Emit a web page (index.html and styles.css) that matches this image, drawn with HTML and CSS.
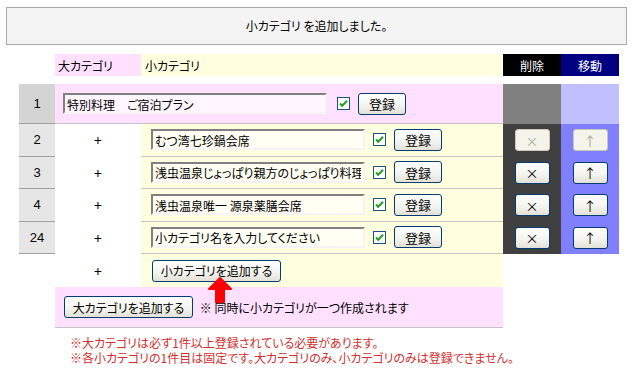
FILE: index.html
```html
<!doctype html>
<html lang="ja">
<head>
    <meta charset="utf-8">
    <title>カテゴリ設定</title>
    <link rel="stylesheet" href="styles.css">
</head>
<body>
    <div class="notice">小カテゴリ を追加しました。</div>

    <table class="cats">
        <tr class="head">
            <td class="num"></td>
            <td class="big">大カテゴリ</td>
            <td class="small">小カテゴリ</td>
            <td class="del">削除</td>
            <td class="move">移動</td>
        </tr>
        <tr class="parent">
            <td class="num">1</td>
            <td class="body" colspan="2">
                <div class="fields">
                    <input type="text" class="name-big" value="特別料理&#12288;ご宿泊プラン">
                    <span class="check"><svg width="13" height="13" viewBox="0 0 13 13"><rect x="0.5" y="0.5" width="12" height="12" fill="#fff" stroke="#1c5180"/><path d="M3 6.5 L5.2 8.8 L10 3.8" fill="none" stroke="#21a121" stroke-width="2"/></svg></span>
                    <button class="btn btn-save">登録</button>
                </div>
            </td>
            <td class="del"></td>
            <td class="move"></td>
        </tr>
        <tr class="child">
            <td class="num">2</td>
            <td class="plus">+</td>
            <td class="body">
                <div class="fields">
                    <input type="text" class="name-small" value="むつ湾七珍鍋会席">
                    <span class="check"><svg width="13" height="13" viewBox="0 0 13 13"><rect x="0.5" y="0.5" width="12" height="12" fill="#fff" stroke="#1c5180"/><path d="M3 6.5 L5.2 8.8 L10 3.8" fill="none" stroke="#21a121" stroke-width="2"/></svg></span>
                    <button class="btn btn-save">登録</button>
                </div>
            </td>
            <td class="del"><button class="btn btn-small" disabled>×</button></td>
            <td class="move"><button class="btn btn-small" disabled>↑</button></td>
        </tr>
        <tr class="child">
            <td class="num">3</td>
            <td class="plus">+</td>
            <td class="body">
                <div class="fields">
                    <input type="text" class="name-small" value="浅虫温泉じょっぱり親方のじょっぱり料理">
                    <span class="check"><svg width="13" height="13" viewBox="0 0 13 13"><rect x="0.5" y="0.5" width="12" height="12" fill="#fff" stroke="#1c5180"/><path d="M3 6.5 L5.2 8.8 L10 3.8" fill="none" stroke="#21a121" stroke-width="2"/></svg></span>
                    <button class="btn btn-save">登録</button>
                </div>
            </td>
            <td class="del"><button class="btn btn-small">×</button></td>
            <td class="move"><button class="btn btn-small">↑</button></td>
        </tr>
        <tr class="child">
            <td class="num">4</td>
            <td class="plus">+</td>
            <td class="body">
                <div class="fields">
                    <input type="text" class="name-small" value="浅虫温泉唯一 源泉薬膳会席">
                    <span class="check"><svg width="13" height="13" viewBox="0 0 13 13"><rect x="0.5" y="0.5" width="12" height="12" fill="#fff" stroke="#1c5180"/><path d="M3 6.5 L5.2 8.8 L10 3.8" fill="none" stroke="#21a121" stroke-width="2"/></svg></span>
                    <button class="btn btn-save">登録</button>
                </div>
            </td>
            <td class="del"><button class="btn btn-small">×</button></td>
            <td class="move"><button class="btn btn-small">↑</button></td>
        </tr>
        <tr class="child">
            <td class="num">24</td>
            <td class="plus">+</td>
            <td class="body">
                <div class="fields">
                    <input type="text" class="name-small" value="小カテゴリ名を入力してください">
                    <span class="check"><svg width="13" height="13" viewBox="0 0 13 13"><rect x="0.5" y="0.5" width="12" height="12" fill="#fff" stroke="#1c5180"/><path d="M3 6.5 L5.2 8.8 L10 3.8" fill="none" stroke="#21a121" stroke-width="2"/></svg></span>
                    <button class="btn btn-save">登録</button>
                </div>
            </td>
            <td class="del"><button class="btn btn-small">×</button></td>
            <td class="move"><button class="btn btn-small">↑</button></td>
        </tr>
        <tr class="add-small">
            <td class="blank"></td>
            <td class="plus">+</td>
            <td class="body">
                <div class="add-wrap">
                    <button class="btn btn-add">小カテゴリを追加する</button>
                    <svg class="arrow" width="26" height="26" viewBox="0 0 26 26"><path d="M13 1 L24 12 L17 12 L17 25 L9 25 L9 12 L2 12 Z" fill="#ff0000" stroke="#ff0000" stroke-width="2" stroke-linejoin="round"/></svg>
                </div>
            </td>
            <td class="blank" colspan="2"></td>
        </tr>
        <tr class="add-big">
            <td class="blank"></td>
            <td class="body" colspan="2">
                <button class="btn btn-add">大カテゴリを追加する</button>
                <span class="hint">※ 同時に小カテゴリが一つ作成されます</span>
            </td>
            <td class="blank" colspan="2"></td>
        </tr>
    </table>

    <div class="notes">
        <div>※大カテゴリは必ず1件以上登録されている必要があります。</div>
        <div>※各小カテゴリの1件目は固定です。大カテゴリのみ、小カテゴリのみは登録できません。</div>
    </div>
</body>
</html>
```

FILE: styles.css
```css
body {
    margin: 0;
    padding: 7px 0 0 6px;
    font-family: "Noto Sans CJK JP", "DejaVu Sans", sans-serif;
    font-size: 12px;
    font-feature-settings: "palt";
    color: #000;
    background-color: #fff;
}
.notice {
    width: 619px;
    height: 36px;
    line-height: 36px;
    border: 1px solid #a8a8a8;
    background-color: #f4f4f4;
    text-align: center;
}
.cats {
    margin: 9px 0 0 13px;
    border-collapse: separate;
    border-spacing: 0;
    width: 600px;
    table-layout: fixed;
}
.cats td {
    padding: 0;
    vertical-align: middle;
}
.head td {
    height: 22px;
    border-bottom: 8px solid #fff;
}
.head .num {
    width: 36px;
}
.head .big {
    width: 83px;
    padding-left: 3px;
    background-color: #ffe0ff;
}
.head .small {
    padding-left: 4px;
    width: 358px;
    background-color: #ffffe0;
}
.head .del,
.head .move {
    width: 58px;
    color: #fff;
    text-align: center;
}
.head .del {
    background-color: #000;
}
.head .move {
    background-color: #000080;
}
.num {
    text-align: center;
    font-family: "Liberation Sans", sans-serif;
    font-size: 13px;
}
.parent td {
    height: 39px;
}
.parent .num {
    background-color: #d4d4d4;
    border-bottom: 1px solid #a0a0a0;
}
.parent .body {
    background-color: #ffe0ff;
    border-bottom: 1px solid #c4c4c4;
    padding-left: 8px;
}
.parent .del {
    background-color: #808080;
}
.parent .move {
    background-color: #c0c0ff;
}
.child td {
    height: 31.5px;
}
.child .num {
    background-color: #e6e6e6;
    border-bottom: 1px solid #a0a0a0;
}
.child .body {
    background-color: #ffffe0;
    border-bottom: 1px solid #c4c4c4;
    padding-left: 10px;
}
.child .del {
    background-color: #404040;
    text-align: center;
}
.child .move {
    background-color: #8080ff;
    text-align: center;
}
.plus {
    text-align: center;
    font-size: 14px;
}
.fields {
    display: flex;
    align-items: center;
}
.fields input {
    box-sizing: border-box;
    height: 21px;
    padding: 1px 2px 0;
    border: 2px solid;
    border-color: #808080 #f4f4f4 #f4f4f4 #808080;
    font-family: inherit;
    font-size: 12px;
    font-feature-settings: "palt";
    color: #000;
    outline: none;
}
.name-big {
    width: 264px;
    background-color: #fff6ff;
}
.name-small {
    width: 214px;
    background-color: #fffff4;
}
.check {
    display: flex;
    margin-left: 10px;
}
.child .check {
    margin-left: 8px;
}
.btn {
    box-sizing: border-box;
    height: 22px;
    padding: 0;
    border: 1px solid #003c74;
    border-radius: 3px;
    background: linear-gradient(#ffffff, #f3f3ee 60%, #e3e1d6);
    font-family: inherit;
    font-size: 12px;
    font-feature-settings: "palt";
    color: #000;
    cursor: pointer;
}
.btn-save {
    width: 48px;
    margin-left: 8px;
    font-size: 13px;
}
.btn-small {
    width: 35px;
    font-size: 13px;
    font-feature-settings: normal;
}
.btn-small:disabled {
    border-color: #c9c7ba;
    background: #f5f4ea;
    color: #aca899;
}
.add-small td {
    height: 33px;
}
.add-small .body {
    background-color: #ffffe0;
    padding-left: 11px;
}
.add-wrap {
    position: relative;
}
.btn-add {
    width: 129px;
}
.arrow {
    position: absolute;
    left: 55px;
    top: 17px;
    z-index: 2;
}
.add-big td {
    height: 40px;
}
.add-big .body {
    background-color: #ffe0ff;
    border-bottom: 1px solid #c4c4c4;
    padding-left: 9px;
}
.hint {
    margin-left: 4px;
}
.notes {
    margin: 7px 0 0 64px;
    color: #d03030;
}
.notes div {
    height: 15px;
    line-height: 15px;
}
```
